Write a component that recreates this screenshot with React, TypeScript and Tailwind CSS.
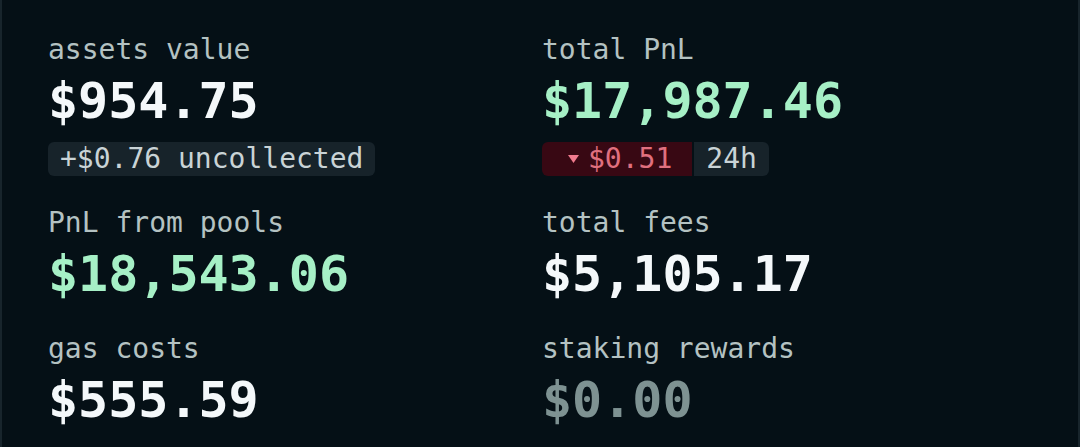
import React from 'react'

type Stat = {
    label: string
    value: string
    tone: 'white' | 'green' | 'muted'
    extra?: React.ReactNode
}

const toneClass = {
    white: 'text-[#f4f8fa]',
    green: 'text-[#a6f0c6]',
    muted: 'text-[#7e9292]',
}

function StatBlock({ label, value, tone, extra }: Stat) {
    return (
        <div className="flex flex-col items-start">
            <div className="text-[28px] leading-[34px] text-[#b4c2c2] mb-[6px]">{label}</div>
            <div className={`text-[50px] leading-[56px] font-bold ${toneClass[tone]}`}>{value}</div>
            {extra}
        </div>
    )
}

export default function App() {
    const stats: Stat[] = [
        {
            label: 'assets value',
            value: '$954.75',
            tone: 'white',
            extra: (
                <div className="mt-[13px] h-[34px] flex items-center px-[12px] rounded-[6px] bg-[#17232a] text-[28px] leading-[34px] text-[#c9d3d6]">
                    +$0.76 uncollected
                </div>
            ),
        },
        {
            label: 'total PnL',
            value: '$17,987.46',
            tone: 'green',
            extra: (
                <div className="mt-[13px] h-[34px] flex items-center gap-[2px] text-[28px] leading-[34px]">
                    <div className="h-full flex items-center gap-[9px] pl-[26px] pr-[20px] rounded-l-[6px] bg-[#380813] text-[#e0707f]">
                        <svg width="11" height="8" viewBox="0 0 11 8">
                            <path d="M0 0 H11 L5.5 8 Z" fill="#f07a8e" />
                        </svg>
                        <span>$0.51</span>
                    </div>
                    <div className="h-full flex items-center px-[12px] rounded-r-[6px] bg-[#17232a] text-[#c9d3d6]">24h</div>
                </div>
            ),
        },
        { label: 'PnL from pools', value: '$18,543.06', tone: 'green' },
        { label: 'total fees', value: '$5,105.17', tone: 'white' },
        { label: 'gas costs', value: '$555.59', tone: 'white' },
        { label: 'staking rewards', value: '$0.00', tone: 'muted' },
    ]

    return (
        <div
            className="w-[1080px] h-[447px] bg-[#051016] border-x-2 border-[#18252c] overflow-hidden"
            style={{ fontFamily: '"DejaVu Sans Mono", "Liberation Mono", monospace' }}
        >
            <div className="grid grid-cols-2 gap-x-[4px] gap-y-[30px] pl-[46px] pr-[46px] pt-[33px]">
                {stats.map(s => (
                    <StatBlock key={s.label} {...s} />
                ))}
            </div>
        </div>
    )
}
